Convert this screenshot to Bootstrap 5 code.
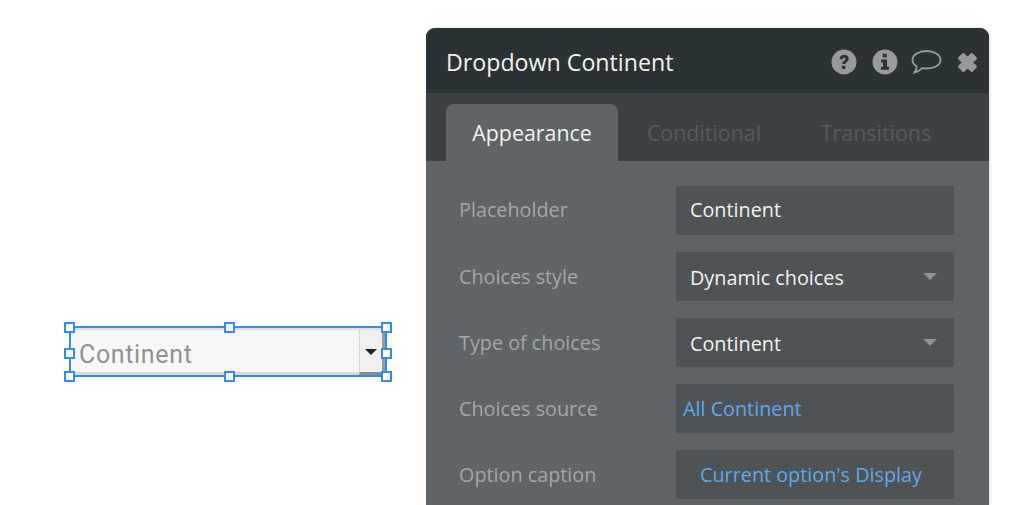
<!DOCTYPE html>
<html lang="en">
<head>
  <meta charset="UTF-8" />
  <title>Dropdown Continent</title>
  <link href="https://cdn.jsdelivr.net/npm/bootstrap@5.3.3/dist/css/bootstrap.min.css" rel="stylesheet" />
  <style>
    html, body { height: 505px; overflow: hidden; background: #fff; }
    body { font-family: "Open Sans", sans-serif; }
    .canvas-side { width: 426px; padding: 326px 0 0 69px; }

    .sel-box { position: relative; width: 318px; height: 51px; border: 2px solid #2f8cf0; background: #f7f7f7; }
    .sel-inner { height: 100%; border-top: 2px solid #e0e0e0; border-bottom: 3px solid #d8d8d8; padding-left: 8px; }
    .sel-text { font-family: Roboto, sans-serif; font-size: 25px; color: #8f9293; letter-spacing: .65px; line-height: 1; padding-top: 7px; }
    .sel-btn { width: 26px; height: calc(100% + 3px); margin-bottom: -3px; padding-top: 2px; padding-right: 1px; background: #f0f0f0; border-left: 1px dotted #bbb; border-right: 3px solid #9a9a9a; border-bottom: 3px solid #8b8b8b; }
    .caret-dark { width: 0; height: 0; border-left: 6px solid transparent; border-right: 6px solid transparent; border-top: 6px solid #222; }
    .handle { position: absolute; width: 11px; height: 11px; background: #fff; border: 2px solid #2f8cf0; }
    .h-tl { left: -7px; top: -6px; }
    .h-tm { left: 153px; top: -6px; }
    .h-tr { right: -7px; top: -6px; }
    .h-ml { left: -7px; top: 20px; }
    .h-mr { right: -7px; top: 20px; }
    .h-bl { left: -7px; bottom: -7px; }
    .h-bm { left: 153px; bottom: -7px; }
    .h-br { right: -7px; bottom: -7px; }

    .panel { width: 563px; height: 477px; margin-top: 28px; background: #5e6467; border-radius: 9px 9px 0 0; box-shadow: 1px 0 3px rgba(0,0,0,.15); overflow: hidden; }
    .panel-head { height: 65px; background: #2b3235; padding: 3px 10px 0 20px; }
    .panel-title { font-size: 23.2px; color: #f1f2f2; }
    .head-icons { gap: 13px; }
    .head-icons .gap-wide { margin-right: 2px; }
    .head-icons .gap-x { margin-left: 1px; }
    .tab-bar { height: 68px; background: #3b4044; padding: 11px 0 0 20px; }
    .tab-item { width: 172px; height: 57px; padding-top: 2px; font-size: 21.4px; color: #565b5e; }
    .tab-on { background: #5e6467; color: #f1f2f2; border-radius: 8px 8px 0 0; }

    .prop-list { padding: 24.75px 35px 0 33px; gap: 17.1px; }
    .prop-row { height: 49px; }
    .prop-label { font-size: 19.8px; color: #a4a8aa; }
    .prop-field { width: 278px; height: 100%; background: #4e5356; border-radius: 2px; font-size: 19.8px; color: #f1f2f2; padding: 0 14px; }
    .prop-choice { padding-top: 3px; }
    .prop-choice .caret-soft { margin-top: -3px; }
    .prop-link { color: #62a8ea; }
    .prop-link.left-tight { padding-left: 7px; }
    .prop-link.shift-left { padding-right: 22px; }
    .caret-soft { width: 0; height: 0; border-left: 7px solid transparent; border-right: 7px solid transparent; border-top: 7px solid #8f9395; margin-right: 3px; }
  </style>
</head>
<body>
  <div class="d-flex">
    <div class="canvas-side">
      <div class="sel-box">
        <div class="sel-inner d-flex align-items-center justify-content-between">
          <span class="sel-text">Continent</span>
          <div class="sel-btn d-flex align-items-center justify-content-center"><div class="caret-dark"></div></div>
        </div>
        <span class="handle h-tl"></span><span class="handle h-tm"></span><span class="handle h-tr"></span>
        <span class="handle h-ml"></span><span class="handle h-mr"></span>
        <span class="handle h-bl"></span><span class="handle h-bm"></span><span class="handle h-br"></span>
      </div>
    </div>

    <div class="panel flex-shrink-0">
      <div class="panel-head d-flex align-items-center justify-content-between">
        <span class="panel-title">Dropdown Continent</span>
        <div class="head-icons d-flex align-items-center">
          <svg class="gap-wide" width="26" height="26" viewBox="0 0 26 26">
            <circle cx="13" cy="13" r="12.5" fill="#979b9e"/>
            <path d="M8.600 10.200c0-2.800 2-4.400 4.600-4.400 2.500 0 4.500 1.500 4.500 3.900 0 3-3.200 3.300-3.200 5.400h-3.200c0-3.500 3-3.700 3-5.200 0-.8-.6-1.300-1.300-1.300-.9 0-1.400.7-1.500 1.800z" fill="#2b3235"/>
            <rect x="10.900" y="16.600" width="3.400" height="3.400" fill="#2b3235"/>
          </svg>
          <svg width="26" height="26" viewBox="0 0 26 26">
            <circle cx="13" cy="13" r="12.500" fill="#979b9e"/>
            <rect x="10.800" y="4.800" width="4" height="3.600" fill="#2b3235"/>
            <path d="M9 10.400h6v7.400h2v3H9v-3h2v-4.400H9z" fill="#2b3235"/>
          </svg>
          <svg width="31" height="27" viewBox="0 0 31 27">
            <path d="M15.500 2C8 2 1.500 5.800 1.500 11c0 2.800 1.800 5 4.300 6.500-.2 2-1 4-2.300 6 3-.7 5.600-2.300 7.700-4.400 1.400.3 2.800.4 4.300.4 7.500 0 14-3.300 14-8.500S23 2 15.500 2z" fill="none" stroke="#979b9e" stroke-width="1.800"/>
          </svg>
          <svg class="gap-x" width="23" height="23" viewBox="0 0 22 22">
            <path d="M3.500 7 7 3.500 11 7.500 15 3.500 18.500 7 14.500 11 18.500 15 15 18.500 11 14.500 7 18.500 3.500 15 7.500 11z" fill="#979b9e" stroke="#979b9e" stroke-width="3" stroke-linejoin="round"/>
          </svg>
        </div>
      </div>

      <div class="tab-bar d-flex">
        <div class="tab-item tab-on d-flex align-items-center justify-content-center">Appearance</div>
        <div class="tab-item d-flex align-items-center justify-content-center">Conditional</div>
        <div class="tab-item d-flex align-items-center justify-content-center">Transitions</div>
      </div>

      <div class="prop-list d-flex flex-column">
        <div class="prop-row d-flex align-items-center justify-content-between">
          <span class="prop-label">Placeholder</span>
          <div class="prop-field d-flex align-items-center">Continent</div>
        </div>
        <div class="prop-row d-flex align-items-center justify-content-between">
          <span class="prop-label">Choices style</span>
          <div class="prop-field prop-choice d-flex align-items-center justify-content-between">Dynamic choices<span class="caret-soft"></span></div>
        </div>
        <div class="prop-row d-flex align-items-center justify-content-between">
          <span class="prop-label">Type of choices</span>
          <div class="prop-field prop-choice d-flex align-items-center justify-content-between">Continent<span class="caret-soft"></span></div>
        </div>
        <div class="prop-row d-flex align-items-center justify-content-between">
          <span class="prop-label">Choices source</span>
          <div class="prop-field prop-link left-tight d-flex align-items-center">All Continent</div>
        </div>
        <div class="prop-row d-flex align-items-center justify-content-between">
          <span class="prop-label">Option caption</span>
          <div class="prop-field prop-link shift-left d-flex align-items-center justify-content-center">Current option's Display</div>
        </div>
      </div>
    </div>
  </div>
</body>
</html>
